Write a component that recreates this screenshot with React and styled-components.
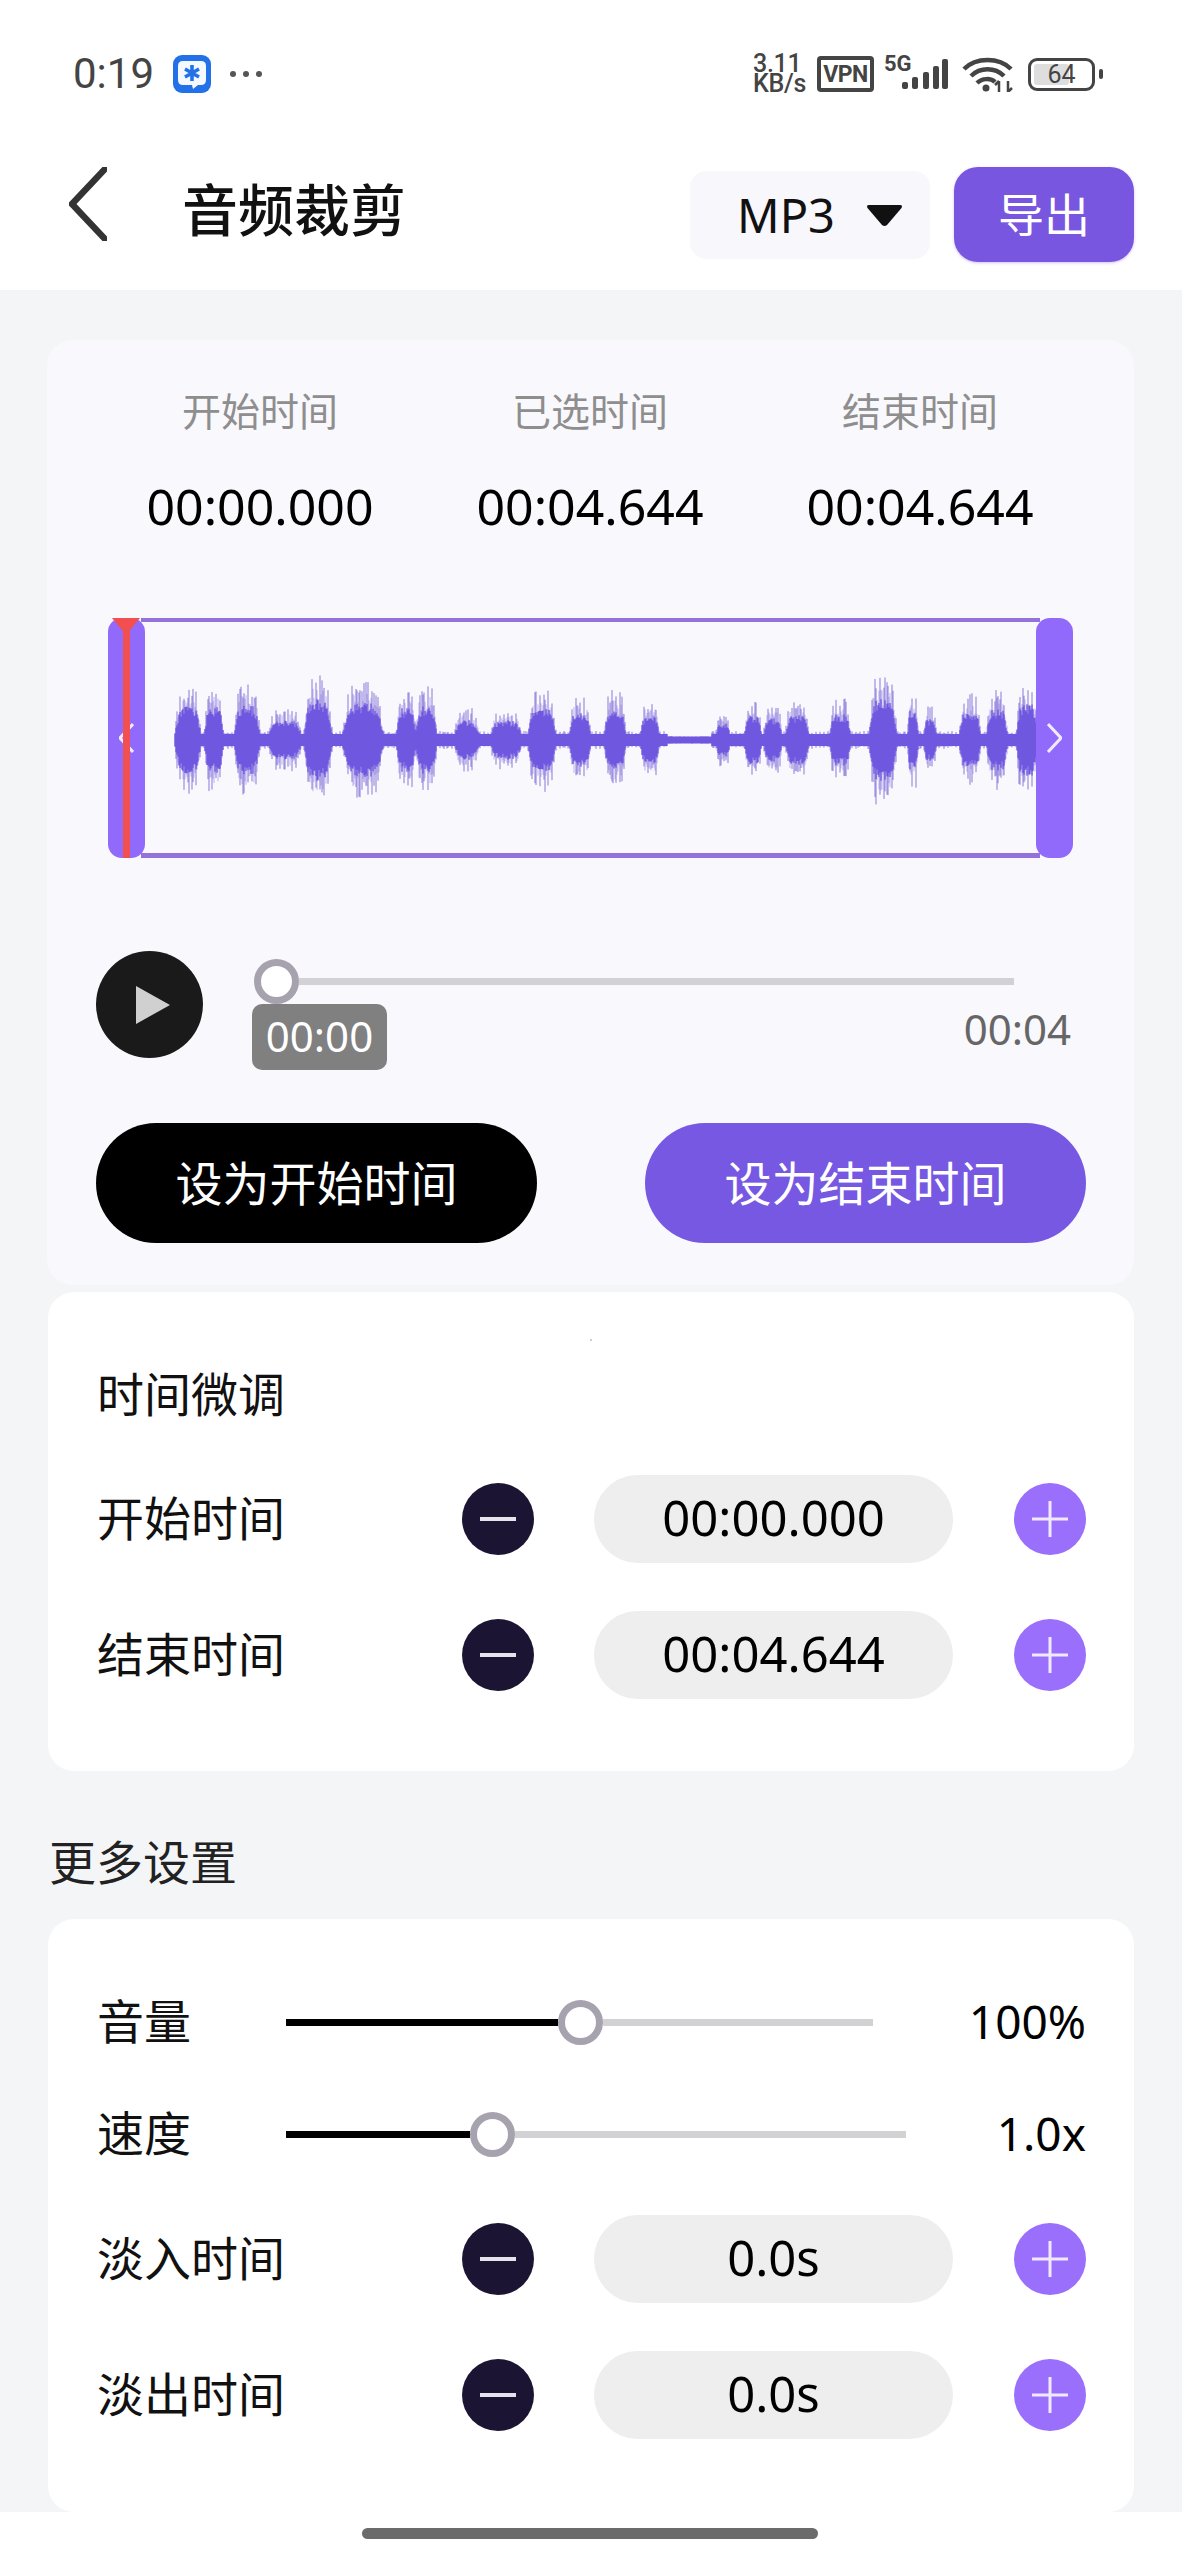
import { useMemo } from "react";
import styled, { createGlobalStyle } from "styled-components";

const GlobalStyle = createGlobalStyle`
  * { box-sizing: border-box; }
  html, body { margin: 0; padding: 0; background: #f4f5f7; }
  body {
    font-family: "Noto Sans", "Noto Sans CJK SC", sans-serif;
    color: #111;
  }
`;

const Screen = styled.div`
  width: 1182px;
  height: 2560px;
  overflow: hidden;
  display: flex;
  flex-direction: column;
  background: #f4f5f7;
`;

const Top = styled.div`
  height: 290px;
  background: #fff;
  flex: none;
`;

const StatusBar = styled.div`
  height: 148px;
  display: flex;
  align-items: center;
  padding: 0 79px 0 73px;
  font-family: Roboto, sans-serif;
`;

const Clock = styled.span`
  font-size: 42px;
  line-height: 42px;
  color: #444;
  margin-right: 19px;
`;

const MoreDots = styled.span`
  display: flex;
  gap: 7px;
  margin-left: 19px;
  i {
    width: 6px;
    height: 6px;
    border-radius: 50%;
    background: #555;
  }
`;

const StatusRight = styled.div`
  margin-left: auto;
  display: flex;
  align-items: center;
  color: #444;
`;

const Speed = styled.span`
  font-size: 25px;
  line-height: 20px;
  font-weight: 500;
  letter-spacing: -0.3px;
  width: 64px;
`;

const VpnBox = styled.span`
  width: 57px;
  height: 36px;
  border: 4px solid #444;
  border-radius: 4px;
  font-size: 23px;
  font-weight: 700;
  display: flex;
  align-items: center;
  justify-content: center;
  letter-spacing: -0.5px;
`;

const SignalWrap = styled.span`
  position: relative;
  display: block;
  margin-left: 10px;
  width: 64px;
  height: 36px;
  svg {
    display: block;
  }
`;

const FiveG = styled.span`
  position: absolute;
  left: 0;
  top: -3px;
  font-size: 22px;
  line-height: 22px;
  font-weight: 700;
`;

const WifiIcon = styled.svg`
  margin-left: 14px;
  display: block;
`;

const Battery = styled.span`
  margin-left: 15px;
  width: 67px;
  height: 33px;
  border: 3px solid #444;
  border-radius: 9px;
  padding: 3px;
  display: block;
  position: relative;
`;

const BatteryFill = styled.span`
  display: flex;
  align-items: center;
  height: 100%;
  width: 64%;
  background: #dedede;
  border-radius: 3px;
`;

const BatteryText = styled.span`
  position: absolute;
  inset: 0;
  display: flex;
  align-items: center;
  justify-content: center;
  font-size: 25px;
  color: #444;
`;

const BatteryNub = styled.span`
  margin-left: 4px;
  width: 4px;
  height: 10px;
  border-radius: 2px;
  background: #444;
`;

const Header = styled.div`
  height: 142px;
  display: flex;
  align-items: flex-start;
  padding: 19px 48px 0 69px;
`;

const BackIcon = styled.svg`
  display: block;
`;

const Title = styled.h1`
  margin: 14px 0 0 75px;
  font-size: 56px;
  line-height: 56px;
  font-weight: 500;
  color: #111;
`;

const FormatSelect = styled.div`
  margin: 4px 0 0 auto;
  width: 240px;
  height: 88px;
  border-radius: 16px;
  background: #f8f7fc;
  display: flex;
  align-items: center;
  padding-left: 47px;
  font-size: 47px;
  color: #111;
`;

const Caret = styled.svg`
  margin-left: 31px;
  display: block;
`;

const ExportButton = styled.div`
  margin-left: 24px;
  width: 180px;
  height: 95px;
  border-radius: 24px;
  background: #7856e0;
  color: #fff;
  display: flex;
  align-items: center;
  justify-content: center;
  font-size: 46px;
  padding-bottom: 5px;
  box-shadow: 0 1px 3px rgba(120, 86, 224, 0.35);
`;

const Content = styled.div`
  flex: 1;
  padding: 50px 48px 0;
  display: flex;
  flex-direction: column;
`;

const EditorCard = styled.section`
  height: 945px;
  margin-left: -1px;
  border-radius: 26px;
  background: #f9f8fd;
  padding-top: 43px;
`;

const TimeGrid = styled.div`
  display: grid;
  grid-template-columns: repeat(3, 330px);
  justify-content: start;
  padding-left: 48px;
`;

const TimeColumn = styled.div`
  display: flex;
  flex-direction: column;
  align-items: center;
  gap: 37px;
`;

const TimeLabel = styled.div`
  font-size: 39px;
  line-height: 56px;
  color: #8e8e8e;
`;

const TimeValue = styled.div`
  font-size: 50px;
  line-height: 60px;
  color: #000;
`;

const WaveBox = styled.div`
  position: relative;
  margin: 82px 0 0 61px;
  width: 965px;
  height: 240px;
  display: flex;
`;

const Handle = styled.div`
  width: 37px;
  flex: none;
  background: #9169fb;
  border-radius: 14px;
  display: flex;
  align-items: center;
  justify-content: center;
  margin-${(p) => (p.$side === "left" ? "right" : "left")}: -4px;
  z-index: 1;
`;

const WaveArea = styled.div`
  flex: 1;
  border-top: 4px solid #9472db;
  border-bottom: 5px solid #9472db;
  display: flex;
  align-items: center;
  svg {
    display: block;
  }
`;

const Playhead = styled.div`
  position: absolute;
  left: 15px;
  top: 0;
  bottom: 0;
  width: 7px;
  background: #f25050;
  z-index: 2;
  &::before {
    content: "";
    position: absolute;
    left: -11px;
    top: 0;
    border-left: 14px solid transparent;
    border-right: 14px solid transparent;
    border-top: 17px solid #f25050;
  }
`;

const PlayerRow = styled.div`
  display: flex;
  align-items: flex-start;
  margin: 93px 0 0 49px;
`;

const PlayButton = styled.div`
  width: 107px;
  height: 107px;
  border-radius: 50%;
  background: #1a1a1a;
  display: flex;
  align-items: center;
  justify-content: center;
  flex: none;
  svg {
    margin-left: 6px;
  }
`;

const Scrubber = styled.div`
  margin: 8px 0 0 51px;
  width: 817px;
  display: flex;
  flex-direction: column;
`;

const Slider = styled.div`
  display: flex;
  align-items: center;
  width: ${(p) => p.$width}px;
  flex: none;
`;

const SliderFill = styled.div`
  width: ${(p) => p.$width}px;
  height: 7px;
  background: #000;
  flex: none;
`;

const SliderThumb = styled.div`
  width: 45px;
  height: 45px;
  border-radius: 50%;
  border: 7px solid #a6a3ae;
  background: #fff;
  flex: none;
`;

const SliderRest = styled.div`
  flex: 1;
  height: 7px;
  background: #d2d2d4;
`;

const ScrubberTimes = styled.div`
  display: flex;
  justify-content: space-between;
  align-items: flex-start;
  margin-left: -2px;
`;

const TimeTip = styled.div`
  width: 135px;
  height: 66px;
  border-radius: 10px;
  background: #808080;
  color: #fff;
  font-size: 42px;
  padding-bottom: 4px;
  display: flex;
  align-items: center;
  justify-content: center;
`;

const EndTime = styled.div`
  font-size: 42px;
  line-height: 50px;
  color: #666;
`;

const ActionRow = styled.div`
  display: flex;
  justify-content: space-between;
  margin: 53px 48px 0 49px;
`;

const ActionButton = styled.div`
  width: 441px;
  height: 120px;
  border-radius: 60px;
  background: ${(p) => (p.$accent ? "#7658e2" : "#000")};
  color: #fff;
  font-size: 47px;
  padding-bottom: 6px;
  display: flex;
  align-items: center;
  justify-content: center;
`;

const WhiteCard = styled.section`
  position: relative;
  background: #fff;
  border-radius: 26px;
  padding: ${(p) => p.$top}px 48px ${(p) => p.$bottom}px 49px;
  display: flex;
  flex-direction: column;
`;

const TuneCard = styled(WhiteCard)`
  margin-top: 7px;
`;

const Speck = styled.i`
  position: absolute;
  left: 542px;
  top: 47px;
  width: 2px;
  height: 2px;
  background: #cfcfcf;
`;

const CardTitle = styled.div`
  font-size: 47px;
  line-height: 60px;
  margin: -1px 0 51px;
`;

const RowLabel = styled.div`
  font-size: 47px;
  line-height: 60px;
  padding-bottom: 3px;
  color: #111;
  width: ${(p) => p.$width}px;
  flex: none;
`;

const StepperRow = styled.div`
  display: flex;
  align-items: center;
  height: 88px;
  margin-top: ${(p) => p.$gap || 0}px;
`;

const RoundButton = styled.div`
  width: 72px;
  height: 72px;
  border-radius: 50%;
  background: ${(p) => (p.$plus ? "#9a6ffb" : "#1c1433")};
  display: flex;
  align-items: center;
  justify-content: center;
  flex: none;
`;

const ValuePill = styled.div`
  width: 359px;
  height: 88px;
  margin: 0 61px 0 60px;
  border-radius: 44px;
  background: #eeeeee;
  color: #000;
  font-size: 49px;
  padding-bottom: 4px;
  display: flex;
  align-items: center;
  justify-content: center;
  flex: none;
`;

const SectionTitle = styled.h2`
  margin: 61px 0 27px 1px;
  font-size: 47px;
  line-height: 60px;
  font-weight: 400;
  color: #222;
`;

const SliderRow = styled.div`
  display: flex;
  align-items: center;
  height: 45px;
  margin-top: ${(p) => p.$gap || 0}px;
`;

const SliderValue = styled.div`
  margin-left: auto;
  font-size: 46px;
  padding-bottom: 3px;
  color: #000;
`;

const HomeBar = styled.div`
  flex: none;
  height: 49px;
  background: #fff;
  display: flex;
  justify-content: center;
  padding-top: 16px;
  margin-left: -3px;
  i {
    width: 456px;
    height: 11px;
    border-radius: 6px;
    background: #6b6b6b;
  }
`;

const BURSTS = [
  [188, 12, 54], [214, 9, 54], [247, 12, 56], [285, 16, 32], [318, 13, 66],
  [363, 19, 60], [406, 9, 52], [426, 10, 55], [467, 12, 32], [506, 15, 32],
  [542, 13, 52], [580, 10, 44], [615, 10, 50], [650, 9, 40], [723, 7, 27],
  [753, 8, 40], [773, 9, 35], [797, 11, 40], [840, 10, 42], [883, 13, 66],
  [913, 5, 50], [930, 6, 34], [970, 10, 47], [997, 10, 50], [1027, 10, 58],
];

const buildWave = () => {
  let seed = 41;
  const rand = () => {
    seed = (seed * 16807) % 2147483647;
    return seed / 2147483647;
  };
  let thin = "";
  let spikes = "";
  let core = "";
  for (let x = 175; x < 1037; x++) {
    let env = x > 667 && x < 712 ? 4 : 9;
    for (const [c, w, h] of BURSTS) {
      const d = (x - c) / w;
      env = Math.max(env, h * Math.exp(-d * d * d * d * d * d));
    }
    const px = x - 141;
    // tall thin lines every few px, a paler fill between them
    if (x % 4 === 0 || rand() > 0.85) {
      const up = env * (0.75 + rand() * 0.25);
      const down = env * (0.7 + rand() * 0.3);
      spikes += `M${px} ${118 - up}V${118 + down}`;
    } else {
      const up = env * (0.5 + rand() * 0.3);
      thin += `M${px} ${118 - up}V${118 + up}`;
    }
    const amp = Math.max(env * (0.42 + rand() * 0.2), Math.min(env * 0.9, 6));
    core += `M${px} ${118 - amp}V${118 + amp}`;
  }
  return { thin, spikes, core };
};

const Waveform = () => {
  const { thin, spikes, core } = useMemo(buildWave, []);
  return (
    <svg width="895" height="231" viewBox="0 0 895 231">
      <path d={thin} stroke="#7058e0" strokeWidth="1" opacity="0.45" fill="none" />
      <path d={spikes} stroke="#6550cc" strokeWidth="1" opacity="0.75" fill="none" />
      <path d={core} stroke="#6f57e0" strokeWidth="1.3" fill="none" />
    </svg>
  );
};

const Chevron = ({ left }) => (
  <svg width="15" height="30" viewBox="0 0 15 30">
    <polyline
      points={left ? "14,1 1,15 14,29" : "1,1 14,15 1,29"}
      fill="none"
      stroke="#f1eaff"
      strokeWidth="3"
    />
  </svg>
);

const Stepper = ({ label, value, gap }) => (
  <StepperRow $gap={gap}>
    <RowLabel $width={365}>{label}</RowLabel>
    <RoundButton>
      <svg width="36" height="36" viewBox="0 0 36 36">
        <path d="M0 18H36" stroke="#e6e3ec" strokeWidth="4" />
      </svg>
    </RoundButton>
    <ValuePill>{value}</ValuePill>
    <RoundButton $plus>
      <svg width="36" height="36" viewBox="0 0 36 36">
        <path d="M0 18H36M18 0V36" stroke="#f1eaff" strokeWidth="3" />
      </svg>
    </RoundButton>
  </StepperRow>
);

const RangeRow = ({ label, width, fill, value, gap }) => (
  <SliderRow $gap={gap}>
    <RowLabel $width={189}>{label}</RowLabel>
    <Slider $width={width}>
      <SliderFill $width={fill} />
      <SliderThumb />
      <SliderRest />
    </Slider>
    <SliderValue>{value}</SliderValue>
  </SliderRow>
);

export default function App() {
  return (
    <Screen>
      <GlobalStyle />
      <Top>
        <StatusBar>
          <Clock>0:19</Clock>
          <svg width="38" height="38" viewBox="0 0 38 38">
            <rect width="38" height="38" rx="9" fill="#2271e8" />
            <path
              d="M10 6H28Q33 6 33 11V25Q33 30 28 30H25L20 34L19 30H10Q5 30 5 25V11Q5 6 10 6Z"
              fill="#f4f8ff"
            />
            <path
              d="M19 10V26M12 14L26 22M26 14L12 22"
              stroke="#2271e8"
              strokeWidth="3.6"
            />
          </svg>
          <MoreDots>
            <i />
            <i />
            <i />
          </MoreDots>
          <StatusRight>
            <Speed>
              3.11
              <br />
              KB/s
            </Speed>
            <VpnBox>VPN</VpnBox>
            <SignalWrap>
              <FiveG>5G</FiveG>
              <svg width="64" height="36" viewBox="0 0 64 36">
                <rect x="18" y="26" width="6" height="7" rx="2" fill="#444" />
                <rect x="28" y="21" width="6" height="12" rx="2" fill="#444" />
                <rect x="39" y="16" width="6" height="17" rx="2" fill="#444" />
                <rect x="49" y="10" width="6" height="23" rx="2" fill="#444" />
                <rect x="58" y="3" width="6" height="30" rx="2" fill="#444" />
              </svg>
            </SignalWrap>
            <WifiIcon width="51" height="35" viewBox="0 0 51 35" fill="none">
              <path d="M2 12C14 0 37 0 49 12" stroke="#444" strokeWidth="4.5" />
              <path d="M9 19C18 10 33 10 42 19" stroke="#444" strokeWidth="4.5" />
              <path d="M15 26C20 21 29 21 33 25" stroke="#444" strokeWidth="4.5" />
              <circle cx="24" cy="31" r="3.5" fill="#444" />
              <path d="M37 35V24M33 28L37 24M46 24V35M46 35L50 31" stroke="#444" strokeWidth="2.5" />
            </WifiIcon>
            <Battery>
              <BatteryFill />
              <BatteryText>64</BatteryText>
            </Battery>
            <BatteryNub />
          </StatusRight>
        </StatusBar>
        <Header>
          <BackIcon width="38" height="74" viewBox="0 0 38 74">
            <polyline
              points="36,2 3,37 36,72"
              fill="none"
              stroke="#333"
              strokeWidth="6.5"
              strokeLinecap="round"
              strokeLinejoin="round"
            />
          </BackIcon>
          <Title>音频裁剪</Title>
          <FormatSelect>
            MP3
            <Caret width="37" height="23" viewBox="0 0 37 23">
              <path d="M3 1H34Q37 1 35.500 4L21 21Q18.500 23 16 21L1.500 4Q0 1 3 1Z" fill="#111" />
            </Caret>
          </FormatSelect>
          <ExportButton>导出</ExportButton>
        </Header>
      </Top>

      <Content>
        <EditorCard>
          <TimeGrid>
            <TimeColumn>
              <TimeLabel>开始时间</TimeLabel>
              <TimeValue>00:00.000</TimeValue>
            </TimeColumn>
            <TimeColumn>
              <TimeLabel>已选时间</TimeLabel>
              <TimeValue>00:04.644</TimeValue>
            </TimeColumn>
            <TimeColumn>
              <TimeLabel>结束时间</TimeLabel>
              <TimeValue>00:04.644</TimeValue>
            </TimeColumn>
          </TimeGrid>

          <WaveBox>
            <Handle $side="left">
              <Chevron left />
            </Handle>
            <WaveArea>
              <Waveform />
            </WaveArea>
            <Handle $side="right">
              <Chevron />
            </Handle>
            <Playhead />
          </WaveBox>

          <PlayerRow>
            <PlayButton>
              <svg width="36" height="40" viewBox="0 0 36 40">
                <path d="M1 1L35 20L1 39Z" fill="#d0d0d0" />
              </svg>
            </PlayButton>
            <Scrubber>
              <Slider $width={760}>
                <SliderThumb />
                <SliderRest />
              </Slider>
              <ScrubberTimes>
                <TimeTip>00:00</TimeTip>
                <EndTime>00:04</EndTime>
              </ScrubberTimes>
            </Scrubber>
          </PlayerRow>

          <ActionRow>
            <ActionButton>设为开始时间</ActionButton>
            <ActionButton $accent>设为结束时间</ActionButton>
          </ActionRow>
        </EditorCard>

        <TuneCard $top={73} $bottom={72}>
          <Speck />
          <CardTitle>时间微调</CardTitle>
          <Stepper label="开始时间" value="00:00.000" />
          <Stepper label="结束时间" value="00:04.644" gap={48} />
        </TuneCard>

        <SectionTitle>更多设置</SectionTitle>

        <WhiteCard $top={81} $bottom={73}>
          <RangeRow label="音量" width={587} fill={272} value="100%" />
          <RangeRow label="速度" width={620} fill={184} value="1.0x" gap={67} />
          <Stepper label="淡入时间" value="0.0s" gap={58} />
          <Stepper label="淡出时间" value="0.0s" gap={48} />
        </WhiteCard>
      </Content>

      <HomeBar>
        <i />
      </HomeBar>
    </Screen>
  );
}
